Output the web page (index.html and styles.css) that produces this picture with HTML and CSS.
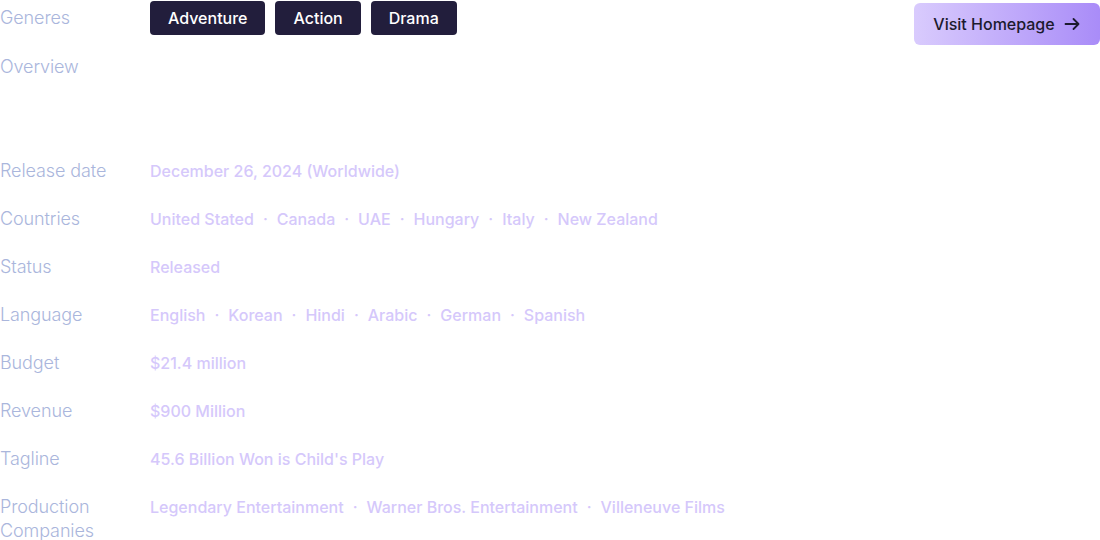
FILE: index.html
```html
<!DOCTYPE html>
<html lang="en">
<head>
<meta charset="utf-8">
<title>Movie details</title>
<link rel="stylesheet" href="styles.css">
</head>
<body>
<div class="details">
  <div class="top">
    <div class="row genres-row">
      <div class="label">Generes</div>
      <div class="chips">
        <span class="chip">Adventure</span>
        <span class="chip">Action</span>
        <span class="chip">Drama</span>
      </div>
    </div>
    <a class="visit" href="#">Visit Homepage
      <svg width="18" height="18" viewBox="0 0 18 18" fill="none" stroke="#1c1a2e" stroke-width="1.8" stroke-linecap="round" stroke-linejoin="round"><path d="M2.5 9h13M10.5 4l5 5-5 5"/></svg>
    </a>
  </div>
  <div class="row overview-row">
    <div class="label">Overview</div>
    <div class="value"></div>
  </div>
  <div class="list">
    <div class="row"><div class="label">Release date</div><div class="value">December 26, 2024 (Worldwide)</div></div>
    <div class="row"><div class="label">Countries</div><div class="value">United Stated<span class="dot">·</span>Canada<span class="dot">·</span>UAE<span class="dot">·</span>Hungary<span class="dot">·</span>Italy<span class="dot">·</span>New Zealand</div></div>
    <div class="row"><div class="label">Status</div><div class="value">Released</div></div>
    <div class="row"><div class="label">Language</div><div class="value">English<span class="dot">·</span>Korean<span class="dot">·</span>Hindi<span class="dot">·</span>Arabic<span class="dot">·</span>German<span class="dot">·</span>Spanish</div></div>
    <div class="row"><div class="label">Budget</div><div class="value">$21.4 million</div></div>
    <div class="row"><div class="label">Revenue</div><div class="value">$900 Million</div></div>
    <div class="row"><div class="label">Tagline</div><div class="value">45.6 Billion Won is Child's Play</div></div>
    <div class="row"><div class="label">Production Companies</div><div class="value">Legendary Entertainment<span class="dot">·</span>Warner Bros. Entertainment<span class="dot">·</span>Villeneuve Films</div></div>
  </div>
</div>
</body>
</html>
```
FILE: styles.css
```css
html, body {
  margin: 0;
  padding: 0;
  background: #ffffff;
}
body {
  font-family: Inter, "Noto Sans", "Liberation Sans", sans-serif;
}
.details {
  width: 1100px;
}
.top {
  display: flex;
  justify-content: space-between;
  align-items: flex-start;
  padding-top: 1px;
  height: 36px;
}
.row {
  display: flex;
  align-items: flex-start;
}
.label {
  width: 150px;
  flex: none;
  font-size: 18px;
  font-weight: 300;
  line-height: 24px;
  color: #aab6dc;
  letter-spacing: -0.1px;
}
.genres-row {
  align-items: center;
}
.chips {
  display: flex;
  gap: 10px;
}
.chip {
  background: #221e3c;
  color: #ffffff;
  font-size: 16px;
  font-weight: 500;
  line-height: 34px;
  height: 34px;
  padding: 0 18px;
  border-radius: 4px;
}
.visit {
  margin-top: 2px;
  display: flex;
  align-items: center;
  justify-content: center;
  gap: 8px;
  height: 42px;
  width: 186px;
  box-sizing: border-box;
  border-radius: 6px;
  background: linear-gradient(90deg, #d9cbfd 0%, #a98cf8 100%);
  color: #1c1a2e;
  font-size: 16px;
  font-weight: 500;
  white-space: nowrap;
  text-decoration: none;
}
.overview-row {
  margin-top: 18px;
}
.overview-row .value {
  min-height: 104px;
}
.list {
  display: flex;
  flex-direction: column;
  gap: 24px;
}
.value {
  font-size: 16px;
  font-weight: 500;
  line-height: 24px;
  color: #d5c8fb;
}
.dot {
  margin: 0 9px;
}
```
